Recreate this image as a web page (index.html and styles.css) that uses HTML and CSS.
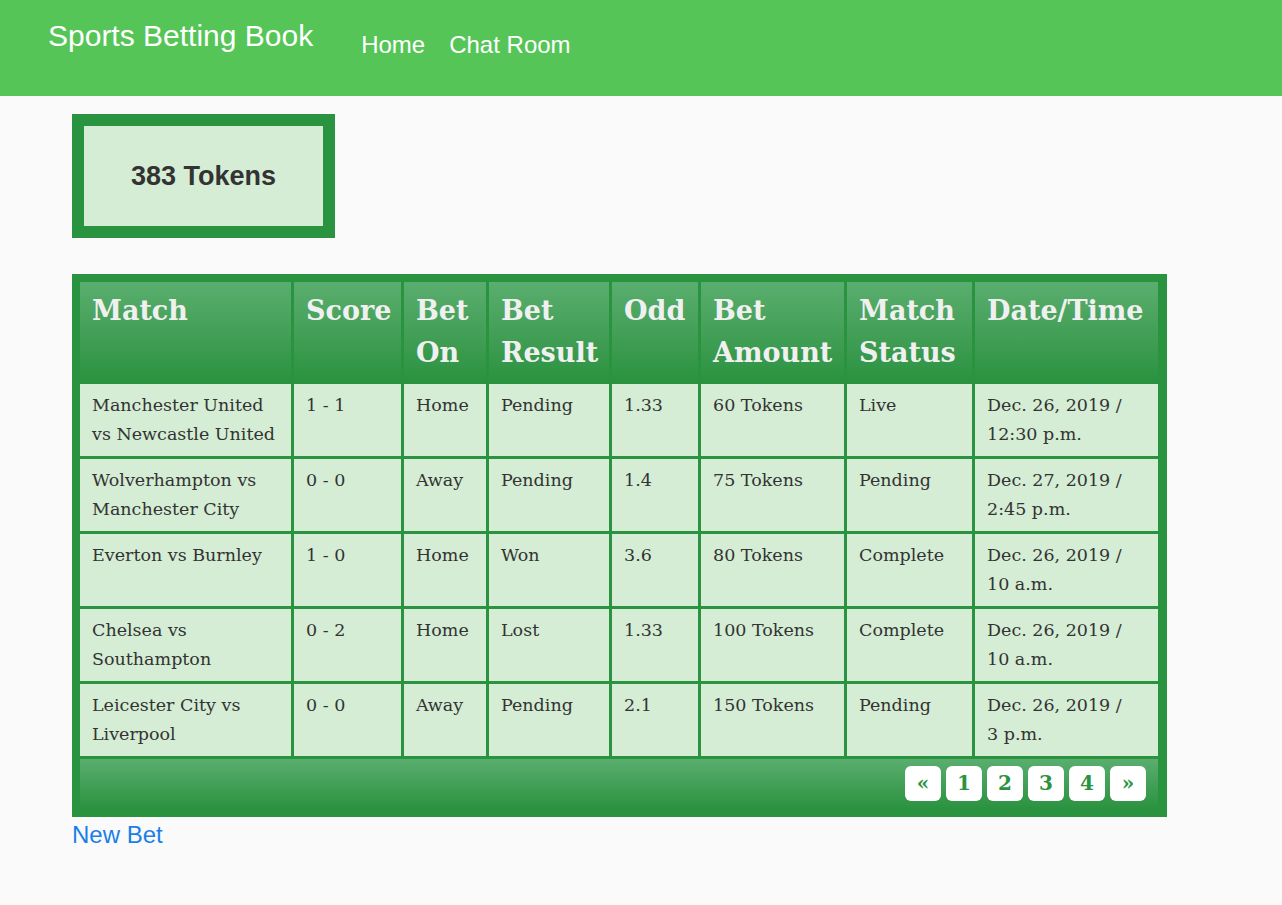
FILE: index.html
```html
<!DOCTYPE html>
<html>
<head>
<meta charset="utf-8">
<title>Sports Betting Book</title>
<link rel="stylesheet" href="styles.css">
</head>
<body>
<header class="navbar">
  <a class="brand" href="#">Sports Betting Book</a>
  <nav class="nav">
    <a href="#">Home</a>
    <a href="#">Chat Room</a>
  </nav>
</header>
<main class="content">
  <div class="tokens"><div class="tokens-inner">383 Tokens</div></div>
  <table class="bets">
    <colgroup>
      <col class="c-match"><col class="c-score"><col class="c-on"><col class="c-result">
      <col class="c-odd"><col class="c-amount"><col class="c-status"><col class="c-date">
    </colgroup>
    <thead>
      <tr>
        <th>Match</th><th>Score</th><th>Bet On</th><th>Bet Result</th>
        <th>Odd</th><th>Bet Amount</th><th>Match Status</th><th>Date/Time</th>
      </tr>
    </thead>
    <tbody>
      <tr><td>Manchester United vs Newcastle United</td><td>1 - 1</td><td>Home</td><td>Pending</td><td>1.33</td><td>60 Tokens</td><td>Live</td><td>Dec. 26, 2019 /<br>12:30 p.m.</td></tr>
      <tr><td>Wolverhampton vs Manchester City</td><td>0 - 0</td><td>Away</td><td>Pending</td><td>1.4</td><td>75 Tokens</td><td>Pending</td><td>Dec. 27, 2019 /<br>2:45 p.m.</td></tr>
      <tr><td>Everton vs Burnley</td><td>1 - 0</td><td>Home</td><td>Won</td><td>3.6</td><td>80 Tokens</td><td>Complete</td><td>Dec. 26, 2019 /<br>10 a.m.</td></tr>
      <tr><td>Chelsea vs Southampton</td><td>0 - 2</td><td>Home</td><td>Lost</td><td>1.33</td><td>100 Tokens</td><td>Complete</td><td>Dec. 26, 2019 /<br>10 a.m.</td></tr>
      <tr><td>Leicester City vs Liverpool</td><td>0 - 0</td><td>Away</td><td>Pending</td><td>2.1</td><td>150 Tokens</td><td>Pending</td><td>Dec. 26, 2019 /<br>3 p.m.</td></tr>
    </tbody>
    <tfoot>
      <tr>
        <td colspan="8">
          <div class="pager">
            <a href="#">&laquo;</a><a href="#">1</a><a href="#">2</a><a href="#">3</a><a href="#">4</a><a href="#">&raquo;</a>
          </div>
        </td>
      </tr>
    </tfoot>
  </table>
  <a class="new-bet" href="#">New Bet</a>
</main>
</body>
</html>
```
FILE: styles.css
```css
html, body {
  margin: 0;
  padding: 0;
}
body {
  background: #fafafa;
  font-family: "Liberation Sans", Arial, sans-serif;
  color: #333;
}
a { text-decoration: none; }

.navbar {
  background: #55c557;
  height: 96px;
  display: flex;
  align-items: flex-start;
  padding-left: 48px;
  box-sizing: border-box;
}
.brand {
  color: #fff;
  font-size: 30px;
  line-height: 34px;
  margin-top: 19px;
}
.nav {
  display: flex;
  gap: 24px;
  margin-left: 48px;
  margin-top: 31px;
}
.nav a {
  color: #fff;
  font-size: 24px;
  line-height: 28px;
}

.content {
  padding: 18px 0 0 72px;
}
.tokens {
  width: 263px;
  height: 124px;
  box-sizing: border-box;
  border: 12px solid #2a9340;
  background: #d4edd4;
  display: flex;
  align-items: center;
  justify-content: center;
}
.tokens-inner {
  font-weight: bold;
  font-size: 27px;
  color: #333;
}

.bets {
  margin-top: 36px;
  width: 1094px;
  table-layout: fixed;
  border-collapse: separate;
  border-spacing: 3px;
  border: 5px solid #2a9340;
  border-right-width: 6px;
  border-bottom-width: 6px;
  background: #2a9340;
  font-family: "DejaVu Serif", Georgia, serif;
}
.c-match { width: 211px; }
.c-score { width: 107px; }
.c-on { width: 82px; }
.c-result { width: 120px; }
.c-odd { width: 86px; }
.c-amount { width: 143px; }
.c-status { width: 125px; }
.c-date { width: 183px; }

.bets th {
  background: linear-gradient(to bottom, #5aae6e, #2c9241);
  color: #f0f0f0;
  font-size: 27px;
  font-weight: bold;
  line-height: 42px;
  text-align: left;
  vertical-align: top;
  padding: 8px 6px 7px 12px;
  height: 84px;
}
.bets td {
  background: #d4edd4;
  color: #333;
  font-size: 17.5px;
  line-height: 29px;
  vertical-align: top;
  padding: 7px 12px 7px 12px;
  height: 58px;
}
.bets tfoot td {
  background: linear-gradient(to bottom, #5aae6e, #2c9241);
  height: auto;
  padding: 7px 12px 7px 12px;
}
.pager {
  display: flex;
  justify-content: flex-end;
  gap: 5px;
}
.pager a {
  background: #fff;
  color: #2a9340;
  border-radius: 6px;
  width: 36px;
  height: 35px;
  display: flex;
  align-items: center;
  justify-content: center;
  font-weight: bold;
  font-size: 20px;
}

.new-bet {
  display: inline-block;
  color: #1a7fe8;
  font-size: 24px;
  line-height: 36px;
}
```
